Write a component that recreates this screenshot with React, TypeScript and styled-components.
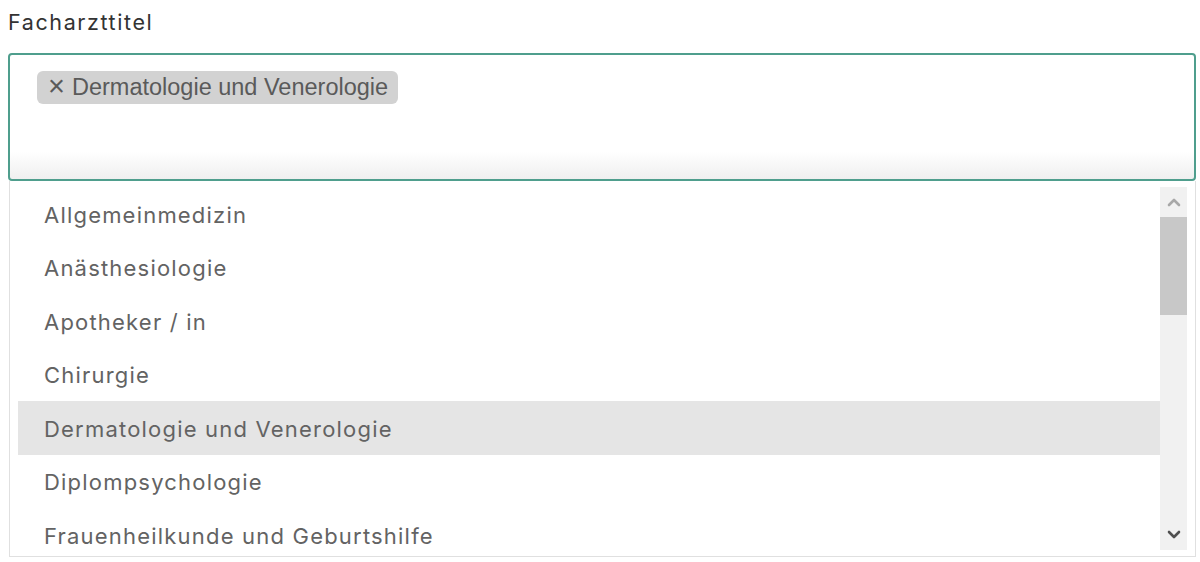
import React from "react";
import styled, { createGlobalStyle } from "styled-components";

const Global = createGlobalStyle`
  html, body { margin: 0; padding: 0; background: #fff; }
  body { width: 1200px; height: 562px; overflow: hidden; }
`;

const Page = styled.div`
  padding: 0 4px 0 8px;
  font-family: Inter, "Open Sans", sans-serif;
`;

const Label = styled.div`
  height: 53px;
  box-sizing: border-box;
  padding-top: 9px;
  font-size: 21.5px;
  color: #333;
  letter-spacing: 1.6px;
`;

const SelectBox = styled.div`
  box-sizing: border-box;
  height: 128px;
  border: 2px solid #4f9e8d;
  border-radius: 4px;
  padding: 16px 27px;
  background: linear-gradient(to bottom, #ffffff 0%, #ffffff 78%, #efefef 100%);
`;

const Chip = styled.span`
  display: inline-flex;
  align-items: center;
  height: 33px;
  padding: 0 10px 0 11px;
  gap: 7px;
  background: #d2d2d2;
  border-radius: 6px;
  font-family: "Liberation Sans", Arial, sans-serif;
  font-size: 23.5px;
  color: #5a5a5a;
`;

const Remove = styled.span`
  font-size: 29px;
  line-height: 1;
  margin-top: -2px;
`;

const Panel = styled.div`
  display: flex;
  margin-left: 1px;
  height: 376px;
  box-sizing: border-box;
  border: 1px solid #e0e0e0;
  border-top: none;
  padding: 6px 8px 0 8px;
  overflow: hidden;
`;

const List = styled.ul`
  flex: 1;
  margin: 0;
  padding: 0;
  list-style: none;
  overflow: hidden;
`;

const Item = styled.li<{ $active?: boolean }>`
  height: 53.5px;
  display: flex;
  align-items: center;
  padding: 2px 0 0 26px;
  box-sizing: border-box;
  font-size: 22px;
  letter-spacing: 1.2px;
  color: #636363;
  background: ${(p) => (p.$active ? "#e5e5e5" : "transparent")};
`;

const Scrollbar = styled.div`
  width: 27px;
  display: flex;
  flex-direction: column;
  background: #f1f1f1;
  margin-bottom: 6px;
`;

const ScrollButton = styled.div`
  height: 30px;
  display: flex;
  align-items: center;
  justify-content: center;
`;

const Thumb = styled.div`
  height: 98px;
  background: #c8c8c8;
`;

const Track = styled.div`
  flex: 1;
`;

const items = [
  "Allgemeinmedizin",
  "Anästhesiologie",
  "Apotheker / in",
  "Chirurgie",
  "Dermatologie und Venerologie",
  "Diplompsychologie",
  "Frauenheilkunde und Geburtshilfe",
];

const Chevron = ({ up, color }: { up?: boolean; color: string }) => (
  <svg width="14" height="10" viewBox="0 0 14 10">
    <path
      d={up ? "M2 8 L7 3 L12 8" : "M2 2 L7 7 L12 2"}
      fill="none"
      stroke={color}
      strokeWidth="2.6"
      strokeLinecap="round"
      strokeLinejoin="round"
    />
  </svg>
);

export default function App() {
  return (
    <>
      <Global />
      <Page>
        <Label>Facharzttitel</Label>
        <SelectBox>
          <Chip>
            <Remove>×</Remove>
            <span>Dermatologie und Venerologie</span>
          </Chip>
        </SelectBox>
        <Panel>
          <List>
            {items.map((t) => (
              <Item key={t} $active={t === "Dermatologie und Venerologie"}>
                {t}
              </Item>
            ))}
          </List>
          <Scrollbar>
            <ScrollButton>
              <Chevron up color="#a8a8a8" />
            </ScrollButton>
            <Thumb />
            <Track />
            <ScrollButton>
              <Chevron color="#505050" />
            </ScrollButton>
          </Scrollbar>
        </Panel>
      </Page>
    </>
  );
}
